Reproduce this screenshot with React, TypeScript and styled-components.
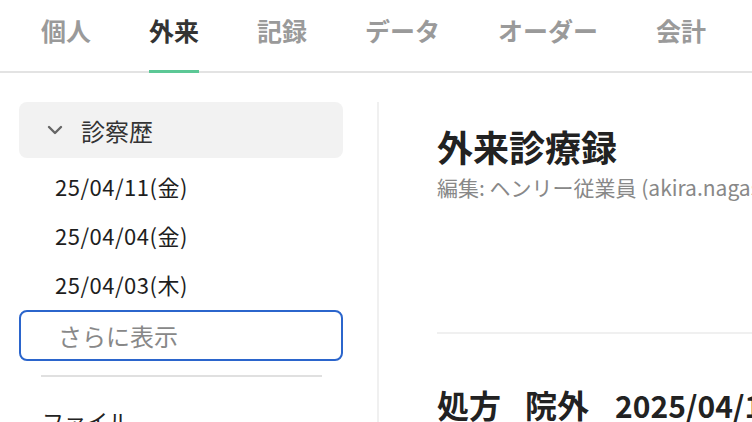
import React from "react";
import styled, { createGlobalStyle } from "styled-components";

const GlobalStyle = createGlobalStyle`
  html, body {
    margin: 0;
    padding: 0;
    background: #ffffff;
    overflow: hidden;
  }
  body {
    font-family: "Noto Sans CJK JP", "Noto Sans", sans-serif;
    color: #222222;
  }
`;

const tabs = ["個人", "外来", "記録", "データ", "オーダー", "会計"];
const visits = ["25/04/11(金)", "25/04/04(金)", "25/04/03(木)"];

const App: React.FC = () => {
  return (
    <>
      <GlobalStyle />
      <Page>
        <TabBar>
          {tabs.map((t) => (
            <Tab key={t} active={t === "外来"}>
              {t}
            </Tab>
          ))}
        </TabBar>
        <Body>
          <Sidebar>
            <SectionHeader>
              <Chevron viewBox="0 0 16 10">
                <path d="M2 2 L8 8 L14 2" />
              </Chevron>
              <HeaderLabel>診察歴</HeaderLabel>
            </SectionHeader>
            <VisitList>
              {visits.map((v) => (
                <VisitRow key={v}>{v}</VisitRow>
              ))}
            </VisitList>
            <MoreButton>さらに表示</MoreButton>
            <Divider />
            <SideItem>ファイル</SideItem>
          </Sidebar>
          <Main>
            <Title>外来診療録</Title>
            <EditedBy>編集: ヘンリー従業員 (akira.nagasawa@henry-app.jp)</EditedBy>
            <Rule />
            <SectionTitle>
              <span>処方</span>
              <span>院外</span>
              <DateText>2025/04/11</DateText>
            </SectionTitle>
          </Main>
        </Body>
      </Page>
    </>
  );
};

export default App;

const Page = styled.div`
  width: 752px;
  height: 422px;
  overflow: hidden;
`;

const TabBar = styled.div`
  display: flex;
  height: 71px;
  padding-left: 12px;
  border-bottom: 2px solid #e3e3e3;
`;

const Tab = styled.div<{ active?: boolean }>`
  position: relative;
  padding: 15px 29px 0;
  font-size: 25px;
  line-height: 30px;
  font-weight: 700;
  white-space: nowrap;
  color: ${(p) => (p.active ? "#333333" : "#9a9a9a")};

  &::after {
    content: "";
    display: ${(p) => (p.active ? "block" : "none")};
    position: absolute;
    left: 29px;
    right: 29px;
    bottom: -2px;
    height: 3px;
    background: #5cc896;
  }
`;

const Body = styled.div`
  display: flex;
  padding-top: 29px;
`;

const Sidebar = styled.div`
  width: 379px;
  box-sizing: border-box;
  flex-shrink: 0;
  padding: 0 34px 0 19px;
  border-right: 2px solid #f0f0f0;
  height: 320px;
`;

const SectionHeader = styled.div`
  display: flex;
  align-items: center;
  height: 56px;
  padding-left: 28px;
  background: #f2f2f2;
  border-radius: 8px;
`;

const Chevron = styled.svg`
  width: 16px;
  height: 10px;
  margin-right: 18px;
  fill: none;
  stroke: #666666;
  stroke-width: 2.4;
  stroke-linecap: round;
  stroke-linejoin: round;
`;

const HeaderLabel = styled.span`
  font-size: 24px;
  color: #333333;
`;

const VisitList = styled.div`
  padding-top: 3px;
  margin-bottom: 2px;
`;

const VisitRow = styled.div`
  height: 49px;
  display: flex;
  align-items: center;
  padding-left: 36px;
  font-size: 22px;
  letter-spacing: 0.5px;
  color: #1e1e1e;
`;

const MoreButton = styled.div`
  box-sizing: border-box;
  height: 51px;
  display: flex;
  align-items: center;
  padding-left: 37px;
  border: 2px solid #2b65cc;
  border-radius: 8px;
  font-size: 24px;
  color: #888888;
`;

const Divider = styled.div`
  height: 2px;
  background: #e0e0e0;
  margin: 14px 21px 0 22px;
`;

const SideItem = styled.div`
  margin-top: 28px;
  padding-left: 23px;
  font-size: 22px;
  line-height: 30px;
  color: #222222;
`;

const Main = styled.div`
  flex: 1;
  min-width: 0;
  padding-left: 58px;
  white-space: nowrap;
`;

const Title = styled.h1`
  margin: 22px 0 0;
  font-size: 36px;
  line-height: 44px;
  font-weight: 700;
  color: #222222;
`;

const EditedBy = styled.div`
  margin-top: 6px;
  font-size: 21px;
  line-height: 26px;
  color: #888888;
`;

const Rule = styled.div`
  height: 2px;
  background: #f0f0f0;
  margin-top: 132px;
`;

const SectionTitle = styled.h2`
  display: flex;
  align-items: baseline;
  gap: 24px;
  margin: 48px 0 0;
  font-size: 32px;
  line-height: 44px;
  font-weight: 700;
  color: #222222;
`;

const DateText = styled.span`
  font-size: 30px;
  margin-left: 2px;
`;
